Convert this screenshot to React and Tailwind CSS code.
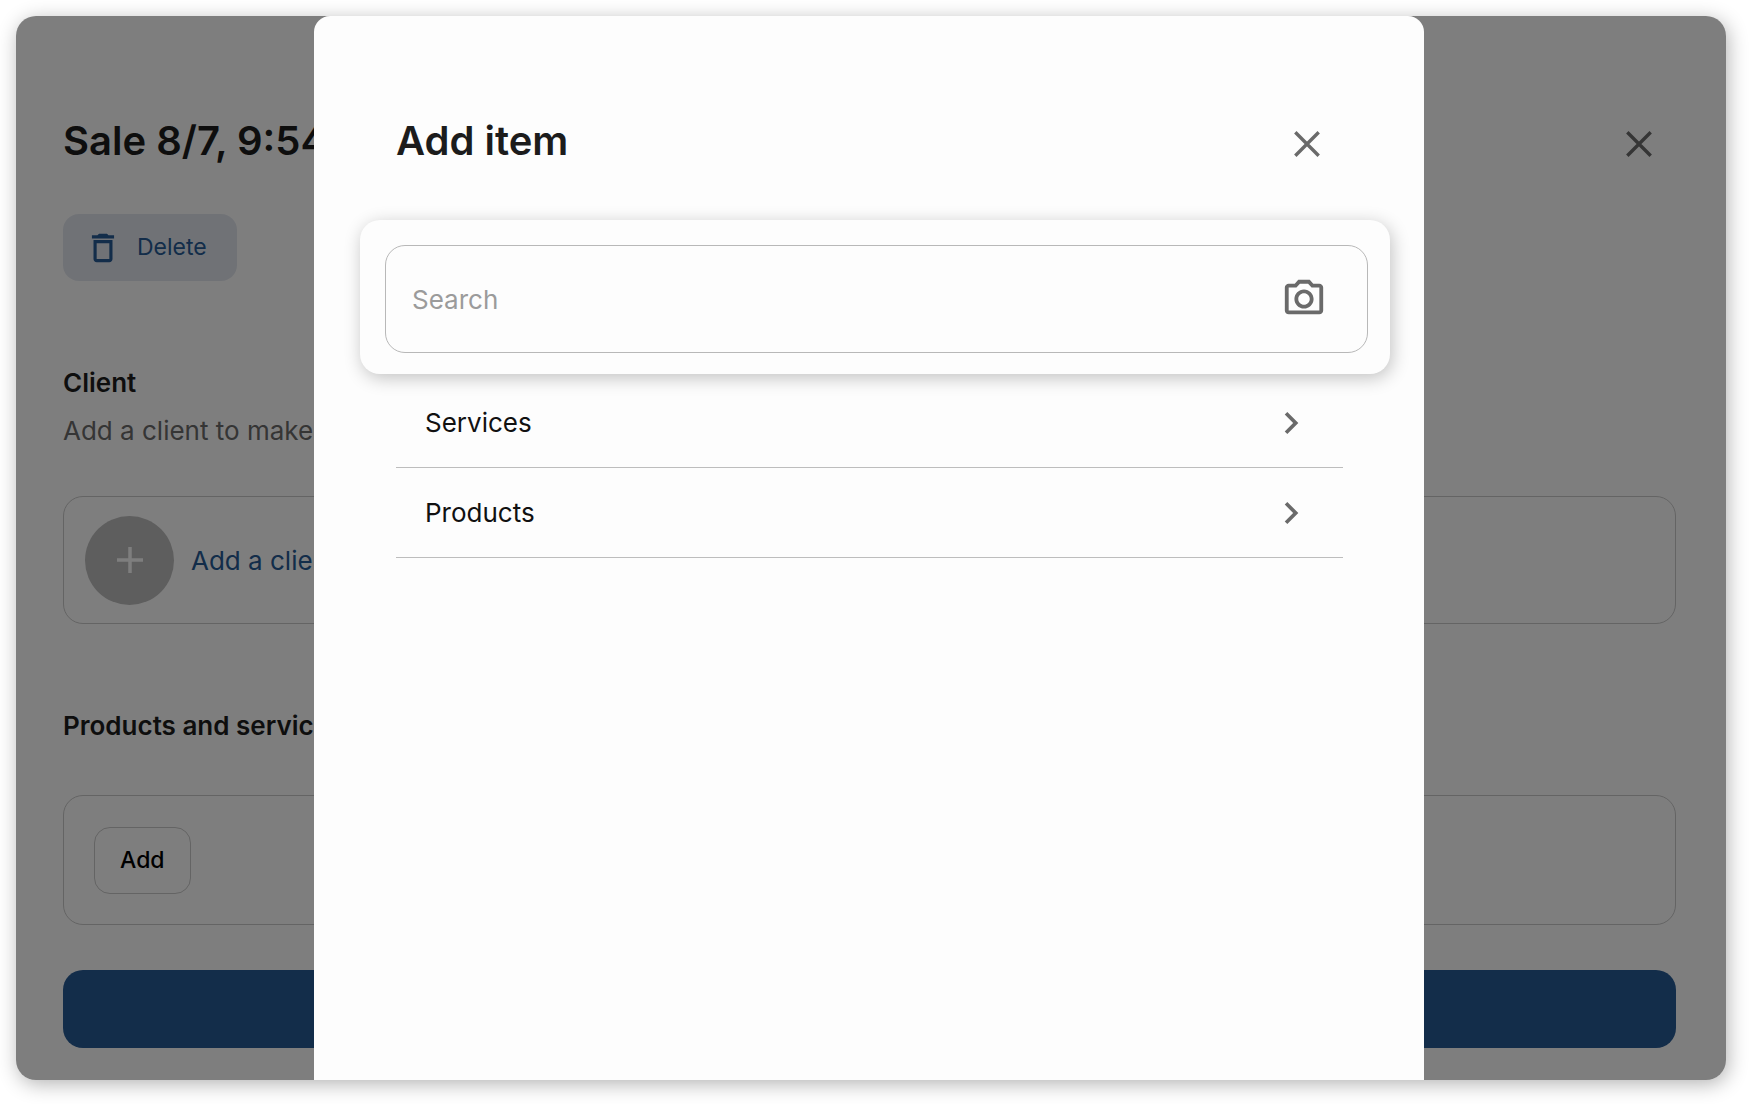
import React, { useState } from 'react';
import { MdChevronRight, MdDeleteOutline, MdOutlineCameraAlt } from 'react-icons/md';

const categories = ['Services', 'Products'];

const CloseIcon = () => (
    <svg viewBox="0 0 26 26" className="w-[26px] h-[26px]" fill="none" stroke="currentColor" strokeWidth="3.4">
        <path d="M1.3 1.3 24.7 24.7M24.7 1.3 1.3 24.7" />
    </svg>
);

const SalePage = () => {
    return (
        <main className="flex flex-col pt-[97px] pl-[47px] pr-[50px] pb-8">
            <div className="flex items-center justify-between h-14 pr-6">
                <h1 className="text-[40px] font-semibold text-[#1c1c1c] whitespace-nowrap">Sale 8/7, 9:54</h1>
                <button type="button" aria-label="Close sale" className="mt-1.5 text-[#6a6a6a]">
                    <CloseIcon />
                </button>
            </div>

            <button
                type="button"
                className="mt-[45px] self-start flex items-center gap-[15px] h-[67px] pl-[21px] pr-[30px] rounded-2xl bg-[#e1e5ed] text-[#265a94] text-[23px]"
            >
                <MdDeleteOutline className="w-[38px] h-[38px]" />
                Delete
            </button>

            {/* Client */}
            <h2 className="mt-[84px] text-[26px] leading-9 font-semibold text-[#1c1c1c]">Client</h2>
            <p className="mt-3 text-[26px] leading-9 text-[#6a6a6a]">Add a client to make a sale</p>
            <div className="mt-[47px] flex items-center h-32 pl-[21px] border border-[#c8c8c8] rounded-[20px]">
                <button type="button" className="flex items-center gap-[17px] text-[26px] text-[#265a94]">
                    <span className="flex items-center justify-center w-[89px] h-[89px] rounded-full bg-[#bcbcbc] text-[#fcfcfc]">
                        <svg viewBox="0 0 26 26" className="w-[26px] h-[26px]" fill="none" stroke="currentColor" strokeWidth="3.5">
                            <path d="M13 0v26M0 13h26" />
                        </svg>
                    </span>
                    Add a client
                </button>
            </div>

            {/* Items */}
            <h2 className="mt-[84px] text-[26px] leading-9 font-semibold text-[#1c1c1c]">Products and services</h2>
            <div className="mt-[51px] flex items-center h-[130px] pl-[30px] border border-[#c8c8c8] rounded-[20px]">
                <button type="button" className="h-[67px] px-[25px] border border-[#c8c8c8] rounded-2xl text-[23px] font-medium text-black">
                    Add
                </button>
            </div>
            <button type="button" aria-label="Continue" className="mt-[45px] h-[78px] rounded-[20px] bg-[#265a94]" />
        </main>
    );
};

const AddItemModal = () => {
    const [query, setQuery] = useState('');

    return (
        <section role="dialog" aria-labelledby="add-item-title" className="flex-1 flex flex-col pt-[97px] rounded-t-2xl bg-[#fdfdfd]">
            <div className="flex items-center justify-between h-14 pl-[82px] pr-[104px]">
                <h2 id="add-item-title" className="text-[40px] font-semibold text-[#1c1c1c]">Add item</h2>
                <button type="button" aria-label="Close" className="mt-1.5 text-[#6a6a6a]">
                    <CloseIcon />
                </button>
            </div>

            {/* Search */}
            <div className="mt-[51px] ml-[46px] mr-[34px] pt-[25px] pb-[21px] pl-[25px] pr-[22px] rounded-[20px] bg-[#fdfdfd] shadow-[2px_4px_18px_rgba(0,0,0,0.24)]">
                <div className="flex items-center h-[108px] pl-[26px] pr-10 border border-[#b8b8b8] rounded-[20px]">
                    <input
                        type="text"
                        aria-label="Search"
                        placeholder="Search"
                        value={query}
                        onChange={(e) => setQuery(e.target.value)}
                        className="flex-1 min-w-0 text-[26px] text-[#1c1c1c] placeholder-[#9b9b9b] focus:outline-none"
                    />
                    <button type="button" aria-label="Scan with camera" className="text-[#6a6a6a]">
                        <MdOutlineCameraAlt className="w-[46px] h-[46px]" />
                    </button>
                </div>
            </div>

            {/* Categories */}
            <ul className="mt-1 ml-[82px] mr-[81px]">
                {categories.map((name) => (
                    <li key={name} className="border-b border-[#bdbdbd]">
                        <button type="button" className="flex items-center justify-between w-full h-[89px] pl-[29px] pr-[30px] text-[26px] text-[#111111]">
                            {name}
                            <MdChevronRight className="w-11 h-11 text-[#6a6a6a]" />
                        </button>
                    </li>
                ))}
            </ul>
        </section>
    );
};

const App = () => {
    return (
        <div className="min-h-screen flex pt-4 pl-4 pr-6 pb-6 bg-white font-['Inter','Liberation_Sans',sans-serif]">
            <div className="relative flex-1 overflow-hidden rounded-[20px] bg-[#fdfdfd] shadow-[2px_4px_20px_rgba(0,0,0,0.3)]">
                <SalePage />
                <div className="absolute inset-0 flex pl-[298px] pr-[302px] bg-black/50">
                    <AddItemModal />
                </div>
            </div>
        </div>
    );
};

export default App;
